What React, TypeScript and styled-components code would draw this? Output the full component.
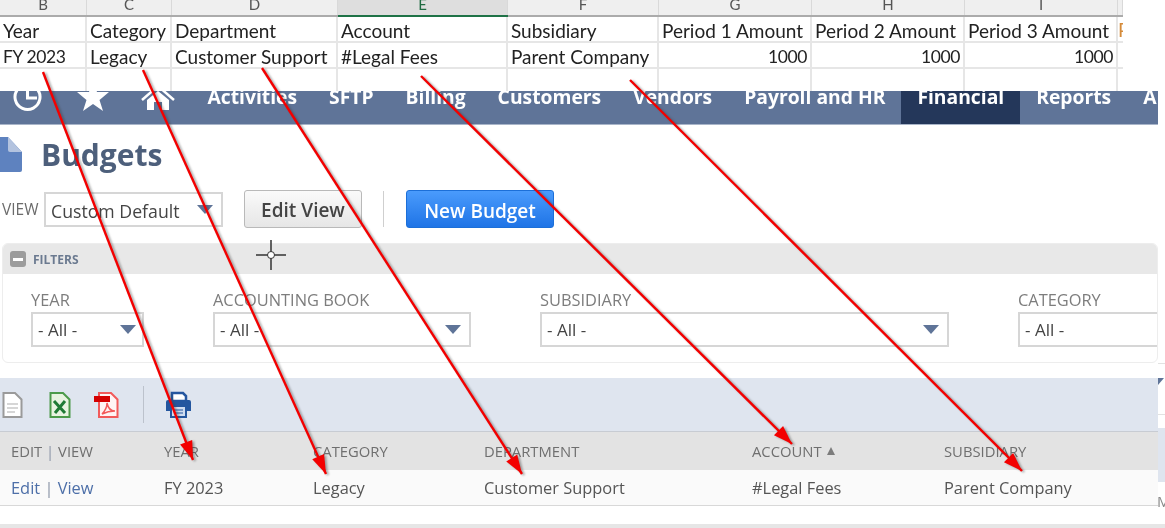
import React from 'react';
import styled, { createGlobalStyle } from 'styled-components';

const GlobalStyle = createGlobalStyle`
  html, body {
    margin: 0;
    padding: 0;
    background: #fff;
  }
  body {
    font-family: "Open Sans", "Liberation Sans", sans-serif;
  }
`;

const Page = styled.div`
  position: relative;
  width: 1165px;
  height: 528px;
  overflow: hidden;
  background: #fff;
  filter: blur(0.45px);
`;

/* spreadsheet paste at the top */
const SHEET_COLS = '87px 85px 166px 170px 151px 153px 153px 153px 5px';

const Sheet = styled.div`
  width: 1123px;
  height: 91px;
  overflow: hidden;
  font-family: Lato, "Liberation Sans", sans-serif;
  color: #222;
`;

const ColHeads = styled.div`
  display: grid;
  grid-template-columns: ${SHEET_COLS};
  height: 15px;
  background: #efefef;
  border-bottom: 2px solid #ababab;
`;

const ColHead = styled.div<{ $active?: boolean }>`
  text-align: center;
  font-size: 15px;
  line-height: 8px;
  height: 15px;
  color: ${p => (p.$active ? '#1f6b41' : '#555')};
  background: ${p => (p.$active ? '#dedede' : 'transparent')};
  border-right: 1px solid #d9d9d9;
  box-sizing: border-box;
  box-shadow: ${p => (p.$active ? '0 2px 0 #1f7246' : 'none')};
`;

const SheetRow = styled.div<{ $height: number }>`
  display: grid;
  grid-template-columns: ${SHEET_COLS};
  height: ${p => p.$height}px;
`;

const Cell = styled.div<{ $right?: boolean; $empty?: boolean; $digits?: boolean }>`
  box-sizing: border-box;
  border-right: 2px solid #e6e6e6;
  border-bottom: ${p => (p.$empty ? 'none' : '2px solid #e6e6e6')};
  padding: 1px 3px 0;
  font-size: ${p => (p.$digits ? 17.5 : 19)}px;
  letter-spacing: ${p => (p.$digits ? '-0.4px' : 'normal')};
  line-height: 25px;
  white-space: nowrap;
  overflow: hidden;
  text-align: ${p => (p.$right ? 'right' : 'left')};
`;

const ClippedCell = styled(Cell)`
  color: #d58b3a;
  padding: 0;
  border-right: none;
`;

/* NetSuite window below it */
const Window = styled.div`
  display: flex;
`;

const Main = styled.div`
  width: 1158px;
  flex: none;
`;

const Nav = styled.nav`
  display: flex;
  height: 33px;
  padding-left: 10px;
  overflow: hidden;
  background: #5f7498;
  border-bottom: 1px solid #a9b5c9;
`;

const NavIcon = styled.svg`
  flex: none;
  width: 34px;
  height: 34px;
  margin-right: 31.5px;
  overflow: hidden;
`;

const NavSpacer = styled.div`
  width: 1px;
  margin-right: -15px;
`;

const NavItem = styled.div<{ $active?: boolean }>`
  flex: none;
  padding: 0 16px;
  font-size: 19.3px;
  font-weight: 700;
  line-height: 12px;
  color: #fff;
  white-space: nowrap;
  background: ${p => (p.$active ? '#24375a' : 'transparent')};
`;

const TitleRow = styled.div`
  display: flex;
  align-items: center;
  gap: 19px;
  height: 60px;
  margin-bottom: 5px;
`;

const Title = styled.h1`
  margin: -2px 0 0;
  font-size: 30px;
  font-weight: 700;
  color: #4d5f7b;
`;

const ViewRow = styled.div`
  display: flex;
  align-items: center;
  height: 38px;
  padding-left: 2px;
`;

const ViewLabel = styled.span`
  width: 42px;
  font-size: 15.5px;
  color: #6b6b6b;
  flex: none;
`;

const SelectBox = styled.div<{ $width: number; $wide?: boolean }>`
  position: relative;
  flex: none;
  box-sizing: border-box;
  width: ${p => p.$width}px;
  height: 35px;
  padding-left: 5px;
  border: 2px solid #d6d6d6;
  background: #fff;
  color: #444;
  font-size: ${p => (p.$wide ? 17.7 : 17)}px;
  line-height: ${p => (p.$wide ? 34 : 32)}px;
  white-space: nowrap;
`;

const Caret = styled.span<{ $right: number }>`
  position: absolute;
  top: 11px;
  right: ${p => p.$right}px;
  width: 0;
  height: 0;
  border-left: 8px solid transparent;
  border-right: 8px solid transparent;
  border-top: 9px solid #5f7498;
`;

const EditButton = styled.button`
  box-sizing: border-box;
  width: 118px;
  height: 38px;
  margin-left: 21px;
  padding: 2px 0 0;
  border: 1px solid #b9b9b9;
  border-radius: 3px;
  background: linear-gradient(#fafafa, #e6e6e6);
  color: #444;
  font-family: inherit;
  font-size: 19px;
  font-weight: 600;
`;

const ToolbarRule = styled.div`
  width: 1px;
  height: 36px;
  margin-left: 21px;
  background: #cfcfcf;
`;

const NewButton = styled.button`
  box-sizing: border-box;
  width: 148px;
  height: 38px;
  margin-left: 22px;
  padding: 3px 0 0;
  border: 1px solid #1c6fd8;
  border-radius: 3px;
  background: linear-gradient(#4a9bfc, #1f74e6);
  color: #fff;
  font-family: inherit;
  font-size: 19px;
  font-weight: 600;
`;

const FilterPanel = styled.section`
  box-sizing: border-box;
  height: 120px;
  margin: 15px 0 0 2px;
  overflow: hidden;
  border: 1px solid #ededed;
  border-radius: 6px;
`;

const FilterHead = styled.div`
  display: flex;
  align-items: center;
  gap: 7px;
  height: 30px;
  padding-left: 7px;
  background: #e8e8e8;
`;

const MinusBox = styled.span`
  display: flex;
  align-items: center;
  justify-content: center;
  width: 16px;
  height: 16px;
  border-radius: 3px;
  background: #9c9c9c;

  &::after {
    content: '';
    width: 10px;
    height: 3px;
    background: #fff;
  }
`;

const FilterTitle = styled.span`
  font-size: 12px;
  font-weight: 700;
  color: #6b7a90;
`;

const FilterFields = styled.div`
  display: flex;
  gap: 69px;
  padding: 15px 0 0 28px;
`;

const Field = styled.div`
  flex: none;
`;

const FieldLabel = styled.div`
  font-size: 16.4px;
  line-height: 22px;
  margin-bottom: 1px;
  color: #7d7d7d;
  white-space: nowrap;
`;

const Toolbar = styled.div`
  display: flex;
  align-items: center;
  box-sizing: border-box;
  height: 54px;
  margin-top: 15px;
  background: #dfe5ef;
  border-bottom: 1px solid #c8ccd3;
`;

const ToolIcon = styled.svg<{ $left: number; $width: number }>`
  flex: none;
  width: ${p => p.$width}px;
  height: 28px;
  margin-left: ${p => p.$left}px;
`;

const ToolRule = styled.div`
  width: 1px;
  height: 37px;
  margin-left: 24px;
  background: #bcc2cc;
`;

const LIST_COLS = '153px 149px 171px 268px 192px 1fr';

const ListHead = styled.div`
  display: grid;
  grid-template-columns: ${LIST_COLS};
  align-items: center;
  height: 38px;
  padding-left: 11px;
  background: #e3e3e3;
  font-size: 14.8px;
  color: #6f6f6f;
`;

const ListRow = styled.div`
  display: grid;
  grid-template-columns: ${LIST_COLS};
  align-items: center;
  height: 35px;
  padding-left: 11px;
  background: #fafafa;
  border-bottom: 1px solid #d8d8d8;
  font-size: 16.4px;
  color: #555;
`;

const Pipe = styled.span`
  color: #8a94a6;
`;

const RowLink = styled.a`
  color: #4d6fa8;
`;

const SortMark = styled.span`
  display: inline-block;
  width: 0;
  height: 0;
  margin-left: 5px;
  vertical-align: 2px;
  border-left: 4.5px solid transparent;
  border-right: 4.5px solid transparent;
  border-bottom: 8px solid #7c7c7c;
`;

const Strip = styled.div`
  position: relative;
  flex: 1;
  overflow: hidden;
  height: 424px;
  color: #888;
`;

const StripLine = styled.div<{ $h: number; $mt: number }>`
  height: ${p => p.$h}px;
  margin-top: ${p => p.$mt}px;
  background: #e2e2e2;
`;

const StripBlock = styled.div`
  height: 54px;
  margin-top: 13px;
  background: #dfe5ef;
`;

const StripTail = styled.div`
  font-size: 15px;
  line-height: 20px;
  margin: 9px 0 0 -1px;
`;

const StripMark = styled.div`
  width: 0;
  height: 0;
  margin-top: 14px;
  border-left: 6px solid #5f7498;
  border-bottom: 7px solid transparent;
`;

const BottomBar = styled.div`
  height: 8px;
  margin-top: 9px;
  background: #e6e6e6;
  border-bottom: 5px solid #f8f8f8;
`;

const ArrowLayer = styled.svg`
  position: absolute;
  inset: 0;
  width: 1165px;
  height: 528px;
  pointer-events: none;
  filter: drop-shadow(2px 1px 1px rgba(60, 60, 60, 0.45));
`;

const CrossHair = styled.svg`
  position: absolute;
  left: 256px;
  top: 240px;
  width: 30px;
  height: 30px;
`;

const arrows = [
  { x1: 43, y1: 72, x2: 193, y2: 460 },
  { x1: 143, y1: 70, x2: 326, y2: 474 },
  { x1: 262, y1: 68, x2: 522, y2: 474 },
  { x1: 421, y1: 76, x2: 792, y2: 444 },
  { x1: 630, y1: 80, x2: 1022, y2: 471 },
];

const headPoints = (a: (typeof arrows)[number]) => {
  const len = Math.hypot(a.x2 - a.x1, a.y2 - a.y1);
  const ux = (a.x2 - a.x1) / len;
  const uy = (a.y2 - a.y1) / len;
  const bx = a.x2 - ux * 19;
  const by = a.y2 - uy * 19;
  return [
    `${a.x2},${a.y2}`,
    `${bx - uy * 6.5},${by + ux * 6.5}`,
    `${bx + uy * 6.5},${by - ux * 6.5}`,
  ].join(' ');
};

const App: React.FC = () => {
  return (
    <Page>
      <GlobalStyle />
      <Sheet>
        <ColHeads>
          <ColHead>B</ColHead>
          <ColHead>C</ColHead>
          <ColHead>D</ColHead>
          <ColHead $active>E</ColHead>
          <ColHead>F</ColHead>
          <ColHead>G</ColHead>
          <ColHead>H</ColHead>
          <ColHead>I</ColHead>
          <ColHead />
        </ColHeads>
        <SheetRow $height={26}>
          <Cell>Year</Cell>
          <Cell>Category</Cell>
          <Cell>Department</Cell>
          <Cell>Account</Cell>
          <Cell>Subsidiary</Cell>
          <Cell>Period 1 Amount</Cell>
          <Cell>Period 2 Amount</Cell>
          <Cell>Period 3 Amount</Cell>
          <ClippedCell>P</ClippedCell>
        </SheetRow>
        <SheetRow $height={26}>
          <Cell $digits>FY 2023</Cell>
          <Cell>Legacy</Cell>
          <Cell>Customer Support</Cell>
          <Cell>#Legal Fees</Cell>
          <Cell>Parent Company</Cell>
          <Cell $right $digits>1000</Cell>
          <Cell $right $digits>1000</Cell>
          <Cell $right $digits>1000</Cell>
          <ClippedCell />
        </SheetRow>
        <SheetRow $height={22}>
          {Array.from({ length: 8 }, (_, i) => (
            <Cell key={i} $empty />
          ))}
        </SheetRow>
      </Sheet>

      <Window>
        <Main>
          <Nav>
            <NavIcon viewBox="0 0 34 34">
              <path d="M7.5 -1.5 A12.5 12.5 0 1 0 17 -6.5" fill="none" stroke="#fff" strokeWidth="3" />
              <path d="M17.5 -4 V7 H27" fill="none" stroke="#fff" strokeWidth="3" />
            </NavIcon>
            <NavIcon viewBox="0 0 34 34">
              <path d="M17 -11 L21 1 L33 1 L23.5 9 L27 20 L17 13 L7 20 L10.5 9 L1 1 L13 1 Z" fill="#fff" />
            </NavIcon>
            <NavIcon viewBox="0 0 34 34">
              <path d="M1 9 L17 -5 L33 9" fill="none" stroke="#fff" strokeWidth="2.5" />
              <path d="M6 9 L17 0 L28 9 V19 H21 V11 H13 V19 H6 Z" fill="#fff" />
            </NavIcon>
            <NavSpacer />
            <NavItem>Activities</NavItem>
            <NavItem>SFTP</NavItem>
            <NavItem>Billing</NavItem>
            <NavItem>Customers</NavItem>
            <NavItem>Vendors</NavItem>
            <NavItem>Payroll and HR</NavItem>
            <NavItem $active>Financial</NavItem>
            <NavItem>Reports</NavItem>
            <NavItem>Analytics</NavItem>
          </Nav>

          <TitleRow>
            <svg width="22" height="36" viewBox="0 0 22 36">
              <path d="M0 0 H8 L22 15 V33 Q22 35 20 35 H0 Z" fill="#5e82bf" />
              <path d="M8 0 L22 15 H10 Q8 15 8 13 Z" fill="#b3c3df" />
            </svg>
            <Title>Budgets</Title>
          </TitleRow>

          <ViewRow>
            <ViewLabel>VIEW</ViewLabel>
            <SelectBox $width={179} $wide>
              Custom Default
              <Caret $right={8} />
            </SelectBox>
            <EditButton>Edit View</EditButton>
            <ToolbarRule />
            <NewButton>New Budget</NewButton>
          </ViewRow>

          <FilterPanel>
            <FilterHead>
              <MinusBox />
              <FilterTitle>FILTERS</FilterTitle>
            </FilterHead>
            <FilterFields>
              <Field>
                <FieldLabel>YEAR</FieldLabel>
                <SelectBox $width={113}>
                  - All -
                  <Caret $right={6} />
                </SelectBox>
              </Field>
              <Field>
                <FieldLabel>ACCOUNTING BOOK</FieldLabel>
                <SelectBox $width={258}>
                  - All -
                  <Caret $right={8} />
                </SelectBox>
              </Field>
              <Field>
                <FieldLabel>SUBSIDIARY</FieldLabel>
                <SelectBox $width={409}>
                  - All -
                  <Caret $right={8} />
                </SelectBox>
              </Field>
              <Field>
                <FieldLabel>CATEGORY</FieldLabel>
                <SelectBox $width={150}>- All -</SelectBox>
              </Field>
            </FilterFields>
          </FilterPanel>

          <Toolbar>
            <ToolIcon $left={2} $width={21} viewBox="0 0 21 28">
              <path d="M1.5 2 H13 L19.5 8.5 V26 H1.5 Z" fill="#fff" stroke="#9a9a9a" strokeWidth="2" />
              <path d="M5 13 H16 M5 17 H16 M5 21 H13" stroke="#c9c9c9" strokeWidth="1.5" />
            </ToolIcon>
            <ToolIcon $left={26} $width={22} viewBox="0 0 22 28">
              <path d="M1.5 2 H14 L20.5 8.5 V26 H1.5 Z" fill="#e8f3e0" stroke="#4c9a4a" strokeWidth="2" />
              <path d="M5 10 L16 22 M16 10 L6 22" stroke="#1f7a35" strokeWidth="3" />
            </ToolIcon>
            <ToolIcon $left={23} $width={25} viewBox="0 0 25 28">
              <path d="M5 2 H17 L23.5 8.5 V26 H5 Z" fill="#fff4f4" stroke="#f25a5a" strokeWidth="2" />
              <rect x="0" y="5" width="16" height="6" fill="#d40000" />
              <path d="M8 23 C12 19 13 14 13 12 C14 17 16 20 21 20 C16 20 12 21 8 23 Z" fill="none" stroke="#f25a5a" strokeWidth="1.5" />
            </ToolIcon>
            <ToolRule />
            <ToolIcon $left={21} $width={27} viewBox="0 0 27 28">
              <path d="M7 2 H18 L21 5 V10 H7 Z" fill="#fff" stroke="#24569f" strokeWidth="2.5" />
              <path d="M3 9 H24 Q26 9 26 11 V20 H21 V16 H6 V20 H1 V11 Q1 9 3 9 Z" fill="#24569f" />
              <rect x="6" y="15" width="15" height="11" fill="#cfdcf0" stroke="#24569f" strokeWidth="2" />
              <path d="M9 19 H18 M9 22 H18" stroke="#24569f" strokeWidth="1" />
            </ToolIcon>
          </Toolbar>

          <ListHead>
            <span>
              EDIT <Pipe>|</Pipe> VIEW
            </span>
            <span>YEAR</span>
            <span>CATEGORY</span>
            <span>DEPARTMENT</span>
            <span>
              ACCOUNT
              <SortMark />
            </span>
            <span>SUBSIDIARY</span>
          </ListHead>
          <ListRow>
            <span>
              <RowLink>Edit</RowLink> <Pipe>|</Pipe> <RowLink>View</RowLink>
            </span>
            <span>FY 2023</span>
            <span>Legacy</span>
            <span>Customer Support</span>
            <span>#Legal Fees</span>
            <span>Parent Company</span>
          </ListRow>
        </Main>
        <Strip>
          <StripLine $h={1} $mt={272} />
          <StripMark />
          <StripLine $h={1} $mt={29} />
          <StripBlock />
          <StripTail>M</StripTail>
        </Strip>
      </Window>
      <BottomBar />

      <CrossHair viewBox="0 0 30 30">
        <path d="M15 0 V12 M15 18 V30 M0 15 H12 M18 15 H30" stroke="#333" strokeWidth="1.5" />
        <circle cx="15" cy="15" r="3.5" fill="#fff" stroke="#333" strokeWidth="1" />
      </CrossHair>

      <ArrowLayer viewBox="0 0 1165 528">
        {arrows.map(a => (
          <g key={a.x1}>
            <line x1={a.x1} y1={a.y1} x2={a.x2} y2={a.y2} stroke="#f30000" strokeWidth="2.4" />
            <polygon points={headPoints(a)} fill="#f30000" />
          </g>
        ))}
      </ArrowLayer>
    </Page>
  );
};

export default App;
